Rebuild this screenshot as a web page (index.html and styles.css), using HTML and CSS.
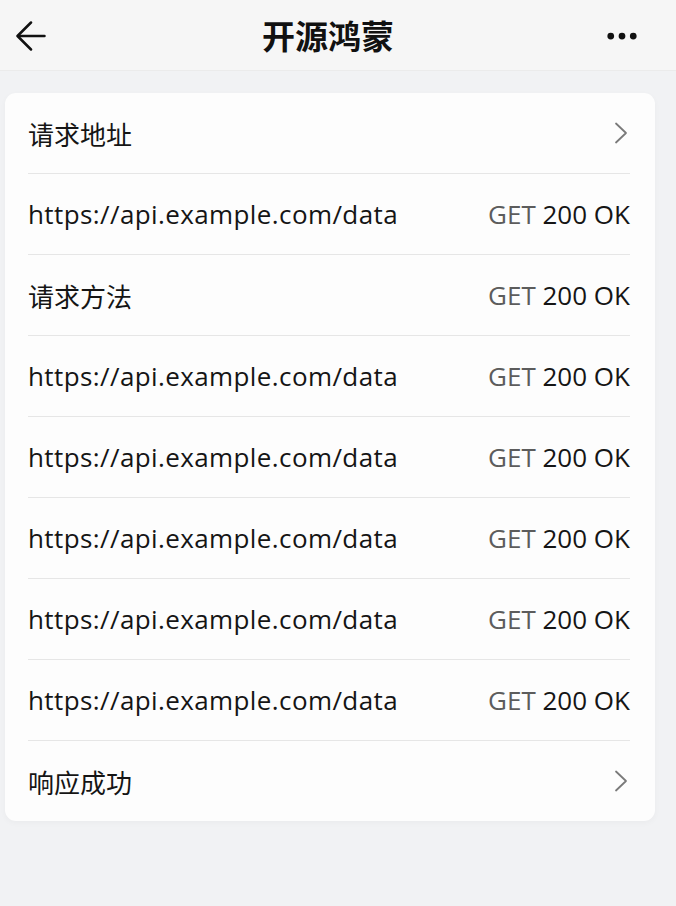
FILE: index.html
```html
<!DOCTYPE html>
<html lang="zh-CN">
<head>
    <meta charset="UTF-8">
    <meta name="viewport" content="width=device-width, initial-scale=1.0">
    <title>开源鸿蒙</title>
    <link rel="stylesheet" href="styles.css">
</head>
<body>
    <header class="top-bar">
        <span class="back">
            <svg width="30" height="30" viewBox="0 0 30 30" fill="none" stroke="#111" stroke-width="2.5" stroke-linecap="round" stroke-linejoin="round">
                <path d="M28.5 15H2.5"/>
                <path d="M15 1.5L1.5 15 15 28.5"/>
            </svg>
        </span>
        <h1 class="title">开源鸿蒙</h1>
        <span class="more">
            <svg width="32" height="8" viewBox="0 0 32 8" fill="#111">
                <circle cx="4" cy="4" r="3.6"/>
                <circle cx="16" cy="4" r="3.6"/>
                <circle cx="28" cy="4" r="3.6"/>
            </svg>
        </span>
    </header>

    <section class="card">
        <div class="row">
            <span class="label cn">请求地址</span>
            <svg class="chevron" width="14" height="22" viewBox="0 0 14 22" fill="none" stroke="#7a7a7a" stroke-width="1.8" stroke-linecap="round" stroke-linejoin="round"><path d="M2 1.5l10 9.5-10 9.5"/></svg>
        </div>
        <div class="row">
            <span class="label url">https://api.example.com/data</span>
            <span class="status"><span class="method">GET</span> 200 OK</span>
        </div>
        <div class="row">
            <span class="label cn">请求方法</span>
            <span class="status"><span class="method">GET</span> 200 OK</span>
        </div>
        <div class="row">
            <span class="label url">https://api.example.com/data</span>
            <span class="status"><span class="method">GET</span> 200 OK</span>
        </div>
        <div class="row">
            <span class="label url">https://api.example.com/data</span>
            <span class="status"><span class="method">GET</span> 200 OK</span>
        </div>
        <div class="row">
            <span class="label url">https://api.example.com/data</span>
            <span class="status"><span class="method">GET</span> 200 OK</span>
        </div>
        <div class="row">
            <span class="label url">https://api.example.com/data</span>
            <span class="status"><span class="method">GET</span> 200 OK</span>
        </div>
        <div class="row">
            <span class="label url">https://api.example.com/data</span>
            <span class="status"><span class="method">GET</span> 200 OK</span>
        </div>
        <div class="row">
            <span class="label cn">响应成功</span>
            <svg class="chevron" width="14" height="22" viewBox="0 0 14 22" fill="none" stroke="#7a7a7a" stroke-width="1.8" stroke-linecap="round" stroke-linejoin="round"><path d="M2 1.5l10 9.5-10 9.5"/></svg>
        </div>
    </section>
</body>
</html>
```

FILE: styles.css
```css
body {
    margin: 0;
    height: 906px;
    background: #f1f2f4;
    font-family: "Open Sans", "Noto Sans CJK SC", sans-serif;
    color: #151515;
}
.top-bar {
    display: flex;
    align-items: center;
    height: 70px;
    padding: 0 39px 0 16px;
    background: #f6f6f6;
    border-bottom: 1px solid #ebebeb;
}
.back, .more {
    display: flex;
    align-items: center;
    width: 30px;
}
.back {
    margin-top: 2px;
}
.more {
    margin-top: 2px;
    justify-content: flex-end;
}
.title {
    flex: 1;
    margin: 0 0 0 3px;
    text-align: center;
    font-family: "Noto Sans CJK SC", sans-serif;
    font-size: 33px;
    font-weight: 700;
    color: #111;
}
.card {
    margin: 22px 0 0 5px;
    width: 602px;
    padding: 0 25px 0 23px;
    background: #fdfdfd;
    border-radius: 11px;
    box-shadow: 0 2px 6px rgba(0, 0, 0, 0.03);
}
.row {
    display: flex;
    align-items: center;
    justify-content: space-between;
    height: 80px;
    border-bottom: 1px solid #e6e6e6;
}
.row:last-child {
    border-bottom: none;
}
.label {
    font-size: 26px;
}
.label.url {
    letter-spacing: 0.4px;
}
.label.cn {
    font-family: "Noto Sans CJK SC", sans-serif;
    font-size: 26px;
}
.status {
    font-size: 26px;
    color: #151515;
}
.method {
    color: #5c5c5c;
}
.chevron {
    margin-right: 2px;
}
```
